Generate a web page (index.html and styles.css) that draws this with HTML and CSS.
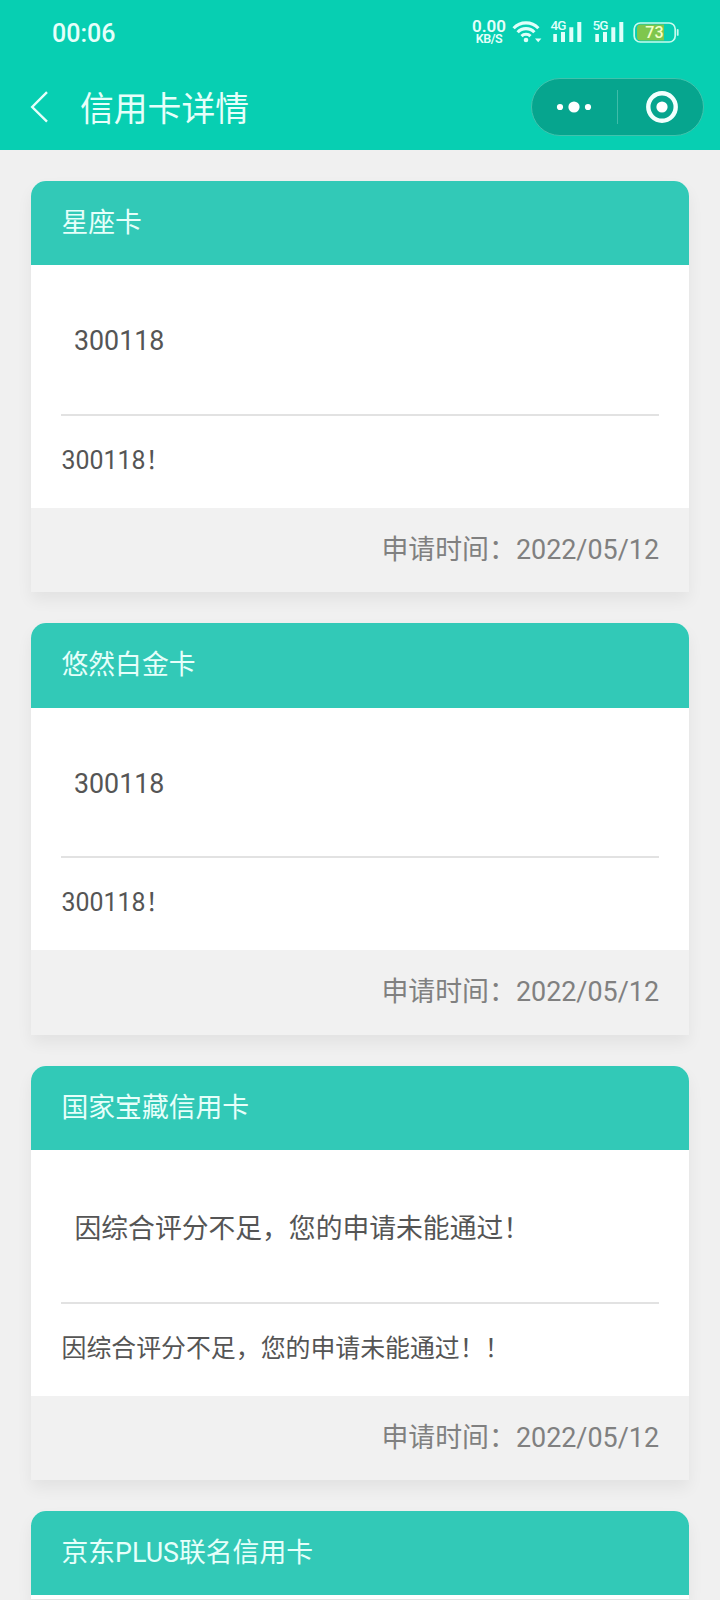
FILE: index.html
```
<!DOCTYPE html>
<html lang="zh-CN">

<head>
  <meta charset="utf-8">
  <meta name="viewport" content="width=device-width, user-scalable=no" />
  <title>信用卡详情</title>
  <link rel="stylesheet" href="styles.css">
</head>

<body>

<header class="top">
  <div class="statusbar">
    <div class="clock">00:06</div>
    <div class="netspeed"><div class="rate">0.00</div><div class="unit">KB/S</div></div>
    <svg class="wifi" width="30" height="24" viewBox="0 0 30 24">
      <g fill="none" stroke="#dffffa" stroke-width="3.1">
        <path d="M1.6 8.2a17 17 0 0 1 24.8 0"/>
        <path d="M5.6 12.3a11.5 11.5 0 0 1 16.8 0"/>
        <path d="M9.5 16.2a6.3 6.3 0 0 1 9 0"/>
      </g>
      <circle cx="14" cy="20" r="2.3" fill="#dffffa"/>
      <path d="M23 18.6h6.4l-3.2 3.6z" fill="#dffffa"/>
    </svg>
    <svg class="signal" width="32" height="24" viewBox="0 0 32 24">
      <text x="-0.5" y="10.3">4G</text>
      <path d="M2.3 14h3.6v8H2.3zM10 12h4v10h-4zM18.3 7.3h4V22h-4zM26.3 2h4v20h-4z"/>
    </svg>
    <svg class="signal" width="32" height="24" viewBox="0 0 32 24">
      <text x="-0.5" y="10.3">5G</text>
      <path d="M2.3 14h3.6v8H2.3zM10 12h4v10h-4zM18.3 7.3h4V22h-4zM26.3 2h4v20h-4z"/>
    </svg>
    <svg class="battery" width="46" height="24" viewBox="0 0 46 24">
      <rect x="1.2" y="3" width="41" height="19" rx="6" fill="none" stroke="#c8fbee" stroke-width="1.7"/>
      <path d="M7.5 4.6H31v15.8H7.5a3.5 3.5 0 0 1-3.5-3.5V8.1a3.5 3.5 0 0 1 3.5-3.5z" fill="#7fc64d"/>
      <rect x="43.8" y="9" width="1.8" height="6.8" rx=".9" fill="#c8fbee"/>
      <text x="12.3" y="17.7">73</text>
    </svg>
  </div>
  <div class="navbar">
    <svg class="back" width="20" height="34" viewBox="0 0 20 34">
      <path d="M17 2.2L2.2 17 17 31.6" fill="none" stroke="#e6fffa" stroke-width="2.4"/>
    </svg>
    <h1>信用卡详情</h1>
    <div class="capsule">
      <svg width="36" height="12" viewBox="0 0 36 12" fill="#fff">
        <circle cx="4" cy="6" r="3.1"/>
        <circle cx="18" cy="6" r="5.6"/>
        <circle cx="32" cy="6" r="3.1"/>
      </svg>
      <i class="divider"></i>
      <svg width="34" height="34" viewBox="0 0 34 34">
        <circle cx="17" cy="17" r="13.7" fill="none" stroke="#f2fffd" stroke-width="4.4"/>
        <circle cx="17" cy="17" r="5.6" fill="#fff"/>
      </svg>
    </div>
  </div>
</header>

<main class="list">
  <section class="card">
    <div class="card-head">星座卡</div>
    <div class="card-body">
      <div class="result">300118</div>
      <div class="reason">300118！</div>
    </div>
    <div class="card-foot">申请时间：2022/05/12</div>
  </section>

  <section class="card">
    <div class="card-head">悠然白金卡</div>
    <div class="card-body">
      <div class="result">300118</div>
      <div class="reason">300118！</div>
    </div>
    <div class="card-foot">申请时间：2022/05/12</div>
  </section>

  <section class="card">
    <div class="card-head">国家宝藏信用卡</div>
    <div class="card-body">
      <div class="result cjk">因综合评分不足，您的申请未能通过！</div>
      <div class="reason">因综合评分不足，您的申请未能通过！！</div>
    </div>
    <div class="card-foot">申请时间：2022/05/12</div>
  </section>

  <section class="card">
    <div class="card-head">京东PLUS联名信用卡</div>
    <div class="card-body"></div>
  </section>
</main>

</body>
</html>
```
FILE: styles.css
```
* {
  box-sizing: border-box;
}

body {
  margin: 0;
  height: 1600px;
  overflow: hidden;
  background: #f0f0f0;
  font-family: Roboto, "Noto Sans CJK SC", sans-serif;
  font-size: 26.8px;
  color: #555;
}

svg {
  display: block;
  flex: none;
}

.top {
  height: 150px;
  background: #07cfb2;
  color: #e6fffa;
}

/* status bar */
.statusbar {
  display: flex;
  align-items: center;
  height: 64px;
  padding-left: 52px;
}

.clock {
  flex: none;
  width: 420px;
  padding-top: 3px;
  font-size: 25px;
  font-weight: 500;
  line-height: 30px;
}

.netspeed {
  width: 34px;
  margin-right: 6px;
  text-align: center;
  font-weight: 600;
}

.rate {
  font-size: 17px;
  line-height: 14px;
}

.unit {
  font-size: 12.5px;
  line-height: 12px;
  letter-spacing: -0.4px;
}

.signal {
  margin-left: 9px;
  overflow: visible;
  fill: #dffffa;
}

.signal + .signal {
  margin-left: 10px;
}

.signal text {
  font-size: 13.5px;
  font-weight: 500;
  letter-spacing: -0.8px;
}

.battery {
  margin-left: 8px;
}

.battery text {
  font-size: 16px;
  font-weight: 500;
  fill: #f3ffc9;
}

/* title row */
.navbar {
  display: flex;
  align-items: center;
  height: 86px;
  padding: 0 16px 0 30px;
}

.navbar h1 {
  margin: 0 auto 0 30px;
  padding-top: 5px;
  font-size: 33.8px;
  font-weight: 400;
  line-height: 50px;
}

.capsule {
  display: flex;
  align-items: center;
  width: 173px;
  height: 58px;
  padding: 0 24px;
  border: 1px solid #40c3ad;
  border-radius: 29px;
  background: #06a58e;
}

.divider {
  width: 1px;
  height: 34px;
  margin: 0 27px 0 25px;
  background: #3fbca9;
}

/* cards */
.list {
  padding: 31px 31px 0;
}

.card {
  margin-bottom: 31.2px;
  border-radius: 15px 15px 0 0;
  background: #fff;
  box-shadow: 0 8px 16px rgba(0, 0, 0, 0.06);
}

.card-head {
  height: 84.4px;
  padding: 0 30.5px;
  border-radius: 15px 15px 0 0;
  background: #32c9b7;
  color: #e6fffa;
  line-height: 85.4px;
}

.card-body {
  padding: 0 30px;
}

.result {
  height: 150.6px;
  padding-left: 13px;
  border-bottom: 2px solid #e2e2e2;
  line-height: 152px;
}

.result.cjk {
  height: 153.6px;
  padding-left: 13.5px;
  line-height: 158px;
}

.reason {
  height: 92px;
  padding-left: 0.5px;
  font-size: 24.9px;
  line-height: 90px;
}

.card-foot {
  height: 84.2px;
  padding: 0 30px;
  background: #f1f1f1;
  color: #808080;
  font-size: 26.9px;
  line-height: 85px;
  text-align: right;
}

.card:last-child {
  margin-bottom: 0;
}

.card:last-child .card-body {
  height: 4px;
}
```
